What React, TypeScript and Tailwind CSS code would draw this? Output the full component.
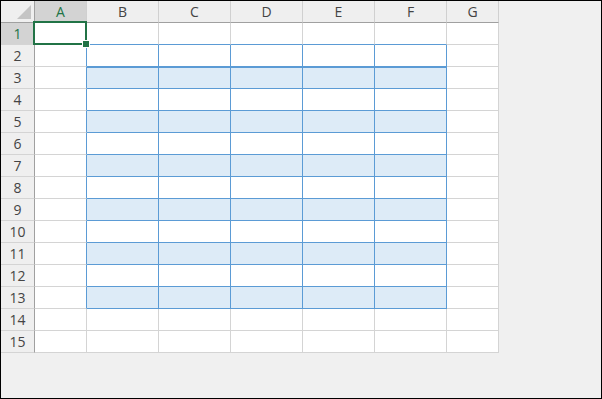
import React from "react";

const COLS = ["A", "B", "C", "D", "E", "F", "G"];
const ROWS = Array.from({ length: 15 }, (_, i) => i + 1);

function Corner() {
  return (
    <div className="relative bg-[#efefef] border-r border-b border-r-[#a0a0a0] border-b-[#a0a0a0]">
      <svg className="absolute right-[3px] bottom-[3px]" width="14" height="14" viewBox="0 0 14 14">
        <polygon points="14,0 14,14 0,14" fill="#c4c4c4" />
      </svg>
    </div>
  );
}

function ColHeader({ c }: { c: string }) {
  const sel = c === "A";
  return (
    <div
      className={
        "flex items-center justify-center border-b border-r border-b-[#a0a0a0] border-r-[#d0d0d0] text-[14px] leading-none " +
        (sel ? "bg-[#d3d3d3] text-[#217346]" : "bg-[#efefef] text-[#444444]")
      }
    >
      {c}
    </div>
  );
}

function RowHeader({ r }: { r: number }) {
  const sel = r === 1;
  return (
    <div
      className={
        "flex items-center justify-center border-b border-r border-r-[#a0a0a0] border-b-[#d4d4d4] text-[14px] leading-none " +
        (sel ? "bg-[#d3d3d3] text-[#217346]" : "bg-[#efefef] text-[#444444]")
      }
    >
      {r}
    </div>
  );
}

function Cell({ r, ci }: { r: number; ci: number }) {
  const inTable = r >= 2 && r <= 13 && ci >= 1 && ci <= 5;
  const band = inTable && r % 2 === 1;
  const rightBlue = inTable || (ci === 0 && r >= 2 && r <= 13);
  const bottomBlue = inTable || (r === 1 && ci >= 1 && ci <= 5);
  const cls = [
    "relative border-r border-b",
    rightBlue ? "border-r-[#5b9bd5]" : "border-r-[#d4d4d4]",
    bottomBlue ? "border-b-[#5b9bd5]" : "border-b-[#d4d4d4]",
    band ? "bg-[#ddebf7]" : "bg-white",
    r === 3 && inTable ? "shadow-[inset_0_1px_0_#5b9bd5]" : "",
  ].join(" ");
  const selected = r === 1 && ci === 0;
  return (
    <div className={cls}>
      {selected && (
        <>
          <div className="absolute left-[-2px] top-[-2px] w-[54px] h-[24px] border-2 border-[#217346] z-10" />
          <div className="absolute left-[47px] top-[17px] w-[8px] h-[8px] bg-[#217346] border border-white z-20" />
        </>
      )}
    </div>
  );
}

export default function App() {
  return (
    <div className="w-[602px] h-[399px] border border-black bg-[#f0f0f0] overflow-hidden font-['Segoe_UI','Open_Sans','Noto_Sans',sans-serif]">
      <div className="grid grid-cols-[34px_52px_72px_72px_72px_72px_72px_52px] grid-rows-[22px] auto-rows-[22px] w-fit">
        <Corner />
        {COLS.map((c) => (
          <ColHeader key={c} c={c} />
        ))}
        {ROWS.map((r) => (
          <React.Fragment key={r}>
            <RowHeader r={r} />
            {COLS.map((c, ci) => (
              <Cell key={c} r={r} ci={ci} />
            ))}
          </React.Fragment>
        ))}
      </div>
    </div>
  );
}
